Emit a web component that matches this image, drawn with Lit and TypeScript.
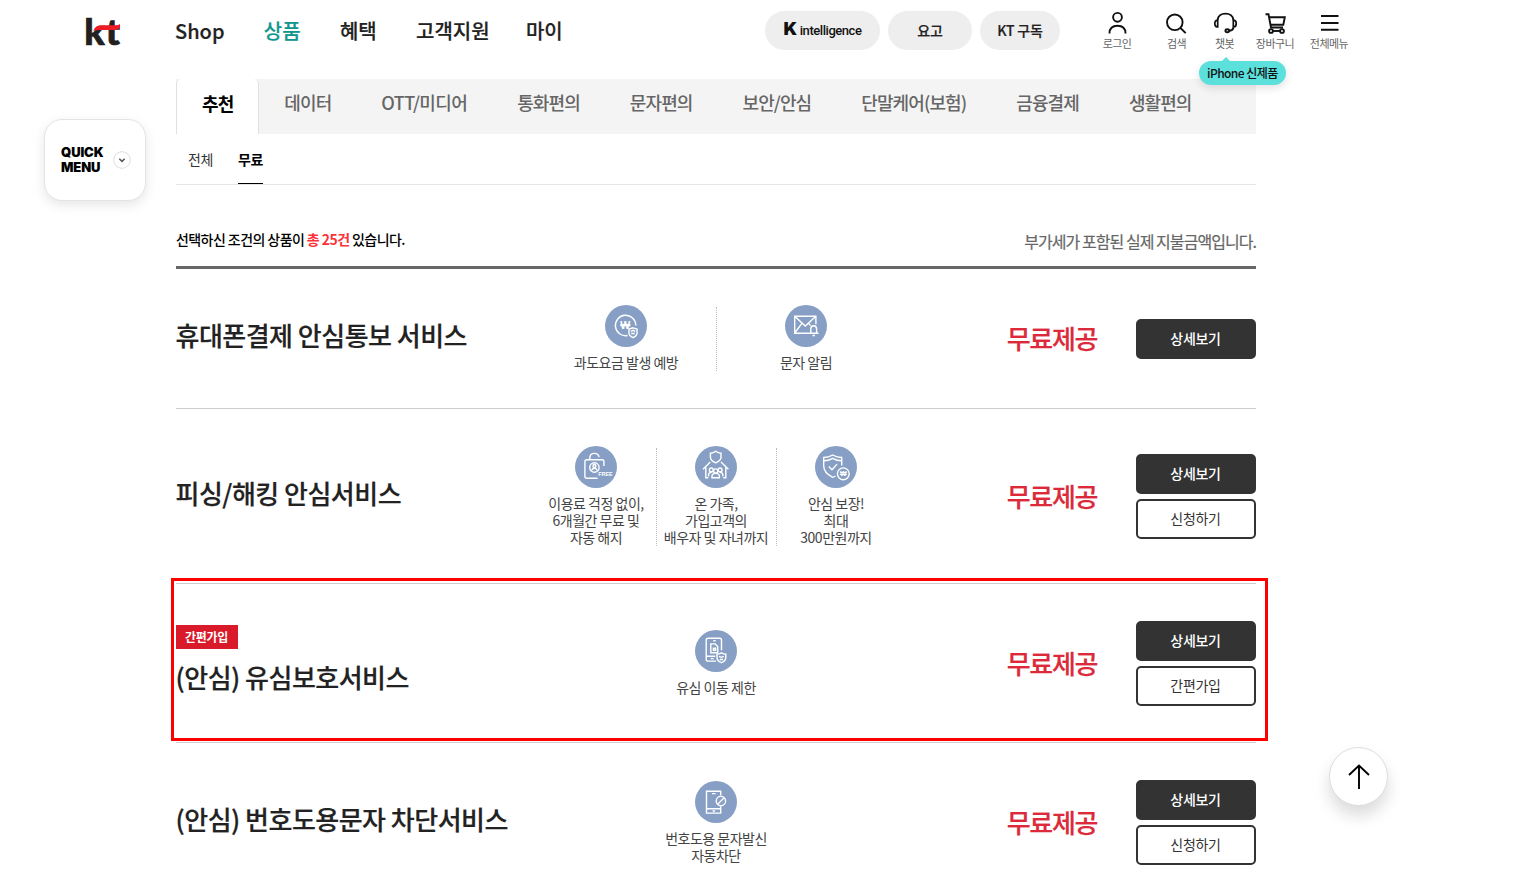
import { LitElement, css, html, svg, TemplateResult } from 'lit'
import { customElement, property } from 'lit/decorators.js'
import { classMap } from 'lit/directives/class-map.js'

interface Feature {
  icon: string
  lines: string[]
}

interface Product {
  name: string
  badge?: string
  marked?: boolean
  features: Feature[]
  buttons: string[]
}

const NAV = ['Shop', '상품', '혜택', '고객지원', '마이']

const TABS = ['추천', '데이터', 'OTT/미디어', '통화편의', '문자편의', '보안/안심', '단말케어(보험)', '금융결제', '생활편의']

const UTILS = [
  { icon: 'user', label: '로그인' },
  { icon: 'search', label: '검색' },
  { icon: 'headset', label: '챗봇', tip: 'iPhone 신제품' },
  { icon: 'cart', label: '장바구니' },
  { icon: 'menu', label: '전체메뉴' },
]

const PRODUCTS: Product[] = [
  {
    name: '휴대폰결제 안심통보 서비스',
    features: [
      { icon: 'won', lines: ['과도요금 발생 예방'] },
      { icon: 'mail', lines: ['문자 알림'] },
    ],
    buttons: ['상세보기'],
  },
  {
    name: '피싱/해킹 안심서비스',
    features: [
      { icon: 'lock', lines: ['이용료 걱정 없이,', '6개월간 무료 및', '자동 해지'] },
      { icon: 'family', lines: ['온 가족,', '가입고객의', '배우자 및 자녀까지'] },
      { icon: 'guard', lines: ['안심 보장!', '최대', '300만원까지'] },
    ],
    buttons: ['상세보기', '신청하기'],
  },
  {
    name: '(안심) 유심보호서비스',
    badge: '간편가입',
    marked: true,
    features: [{ icon: 'usim', lines: ['유심 이동 제한'] }],
    buttons: ['상세보기', '간편가입'],
  },
  {
    name: '(안심) 번호도용문자 차단서비스',
    features: [{ icon: 'block', lines: ['번호도용 문자발신', '자동차단'] }],
    buttons: ['상세보기', '신청하기'],
  },
]

// 24x24
const LINE_ICONS: Record<string, TemplateResult> = {
  user: svg`
    <circle cx="12.500" cy="6.3" r="4.400"/>
    <path d="M4.500 22.500c0-4.800 3-7.700 8-7.700s8 2.900 8 7.700"/>`,
  search: svg`
    <circle cx="9.800" cy="11.300" r="7.800"/>
    <path d="M15.500 17l5.200 5.200"/>`,
  headset: svg`
    <path d="M4.500 9.200C4.900 5 8.300 2.600 12.500 2.600s7.600 2.400 8 6.600M20.500 16.500c-.4 2.200-2 3.300-4.800 3.300"/>
    <path d="M4.700 9.400H4.100C2.500 9.400 1.800 10.500 1.800 12.600s.7 3.300 2.300 3.300h.6zM20.300 9.400h.6c1.600 0 2.300 1.100 2.300 3.200s-.7 3.300-2.300 3.300h-.6z" stroke-width="1.7"/>
    <ellipse cx="14.300" cy="19.700" rx="1.900" ry="1.500"/>`,
  cart: svg`
    <path d="M2.500 3.200h3l2.500 13.300h12M6.200 6.200h15.600l-1.500 7.600H7.800"/>
    <circle cx="8" cy="20" r="1.900"/>
    <circle cx="19" cy="20" r="1.900"/>
    <path d="M9.900 20h7.200"/>`,
  menu: svg`<path d="M4 5h17.500M4 12h17.500M4 18.700h17.500"/>`,
}

// 42x42, drawn over the blue circle
const FEATURE_ICONS: Record<string, TemplateResult> = {
  won: svg`
    <path d="M22.500 30.500A10.200 10.200 0 1 1 30.800 20.500"/>
    <text class="won" x="20.300" y="24.300" font-size="10.500">₩</text>
    <path d="M28 22.800l4 1.200v4c0 2.200-1.500 3.500-4 4.600-2.500-1.100-4-2.400-4-4.600v-4zM25.800 26.300l2.200-1 2.200 1M26.200 28.500h3.600"/>`,
  mail: svg`
    <path d="M24 28.200H9.700V11.200h21.200v8M9.700 11.200l10.600 9.800 10.600-9.800M9.700 28l7.200-9.600M23.700 18.400l1.800 2.200"/>
    <path d="M24.800 28.300h7.800l-1-1.400v-3c0-2-1.100-3.200-2.900-3.200s-2.900 1.200-2.900 3.200v3zM27.500 30.500h2.400"/>`,
  lock: svg`
    <path d="M14.700 13.600v-1.200c0-3 1.800-5 4.700-5 2.600 0 4.200 1.400 4.700 3.600M28.900 20v-4.500c0-1.100-.7-1.800-1.800-1.800H11.800c-1.200 0-1.900.7-1.900 1.800v15c0 1.100.7 1.700 1.900 1.700h10.800"/>
    <circle cx="19.400" cy="21.500" r="4.700"/>
    <circle cx="19.400" cy="20" r="1.500"/>
    <path d="M16.500 24.500c.5-1.500 1.500-2.200 2.900-2.200s2.400.7 2.900 2.200"/>
    <text x="30.400" y="29.800" font-size="5.400">FREE</text>`,
  family: svg`
    <path d="M20.700 5.300c1.800 1.400 3.500 1.900 5.300 1.900v4c0 2.400-1.700 4-5.300 5.600-3.600-1.600-5.300-3.200-5.300-5.600v-4c1.800 0 3.500-.5 5.300-1.900z"/>
    <path d="M15.300 16L8 23.200M26 16l7.400 7.200M10.800 21.300v10.500h2.500M30.800 21.300v10.500h-2.500"/>
    <circle cx="16.300" cy="23.900" r="1.900"/>
    <circle cx="25.100" cy="23.900" r="1.900"/>
    <circle cx="20.700" cy="25" r="2.100"/>
    <path d="M13.500 30.500v-1.400c0-1.600 1.100-2.700 3.200-2.700M27.900 30.500v-1.400c0-1.600-1.100-2.700-3.200-2.700M17 31.700v-1.500c0-1.800 1.400-2.800 3.700-2.800s3.700 1 3.700 2.800v1.500z"/>`,
  guard: svg`
    <path d="M20.500 30c-1 .6-1.900 1-2.800 1.300C11.800 28.500 8.700 25 8.700 19.800v-8.300c3.600 0 6.400-.9 9-2.500 2.600 1.600 5.400 2.500 9 2.500v8"/>
    <path d="M8.800 14.800c3.500 0 6.300-.9 8.900-2.500 2.600 1.600 5.400 2.500 8.900 2.500M13.800 20.600l3.200 3.100 5-5.600"/>
    <circle cx="28.300" cy="27.800" r="5.900"/>
    <text class="won" x="28.300" y="30.300" font-size="7">₩</text>`,
  usim: svg`
    <path d="M26.500 20.300V10.200c0-1.200-.7-1.900-1.900-1.900H13.100c-1.200 0-1.900.7-1.900 1.900v19c0 1.200.7 1.900 1.900 1.900h8M18.200 10.700h2.500M11.200 26.200h9M15.700 28.600h3"/>
    <path d="M15.800 13.900h4.400l2.500 2.600v6.200h-6.900zM18.400 18.200h2.200v2h-2.200z"/>
    <path d="M26.400 22.800c1.500.9 2.900 1.300 4.400 1.300v3.300c0 2.400-1.500 4-4.400 5.300-2.900-1.300-4.400-2.900-4.400-5.300v-3.300c1.500 0 2.900-.4 4.400-1.300zM24 26.300l2.400 1 2.400-1M24.800 29.500h3.200"/>`,
  block: svg`
    <path d="M25.700 14V10.200H11.500v21.900h14.200v-6.600M17 12.600h3.500M11.500 27.800h14.200M17.600 30h2.500"/>
    <circle cx="25.900" cy="20" r="4.700"/>
    <path d="M22.700 23.200l6.400-6.400"/>`,
}

@customElement('kt-header')
export class KtHeader extends LitElement {
  @property()
  current = '상품'

  render() {
    return html`
      <svg class="logo" viewBox="0 0 36 30">
        <text x="-0.800" y="28.400" textLength="20.500" lengthAdjust="spacingAndGlyphs">k</text>
        <text x="20.500" y="28.400" textLength="14.500" lengthAdjust="spacingAndGlyphs">t</text>
        <path d="M8.300 13.800C9.800 10 12.500 8.300 16.500 8.300h14.500c1.600 0 2.800-.4 4-1.300v3c-.9 2-2.500 3-5 3H15.500c-2.600 0-4.800.1-7.200.8z"/>
      </svg>
      <nav>
        ${NAV.map((name) => html`<a class=${classMap({ on: name === this.current })}>${name}</a>`)}
      </nav>
      <div class="pills">
        <a class="pill ai"><b>K</b><span>intelligence</span></a>
        <a class="pill yogo">요고</a>
        <a class="pill sub">KT 구독</a>
      </div>
      <ul class="utils">
        ${UTILS.map(
          (u) => html`
            <li class=${u.icon}>
              <svg viewBox="0 0 24 24">${LINE_ICONS[u.icon]}</svg>
              <span>${u.label}</span>
              ${u.tip ? html`<em>${u.tip}</em>` : ''}
            </li>
          `
        )}
      </ul>
    `
  }

  static styles = css`
    :host {
      display: flex;
      align-items: flex-start;
      height: 79px;
      padding-left: 85px;
      box-sizing: border-box;
    }
    .logo {
      width: 36px;
      height: 30px;
      margin-top: 17px;
      overflow: visible;
      font: 900 36px/30px Lato, sans-serif;
      fill: #231f20;
      stroke: #231f20;
      stroke-width: 0.7;
    }
    .logo path {
      fill: #ed1c24;
      stroke: none;
    }
    nav {
      display: flex;
      gap: 39.3px;
      width: 590px;
      margin-left: 54px;
      padding-top: 16px;
      box-sizing: border-box;
      font-size: 20px;
      font-weight: 500;
      line-height: 30px;
      -webkit-text-stroke: 0.2px;
      color: #222;
      white-space: nowrap;
    }
    nav a:last-child {
      margin-left: -3px;
    }
    .on {
      color: #12978f;
    }
    .pills {
      display: flex;
      gap: 8px;
      padding-top: 11px;
    }
    .pill {
      display: flex;
      align-items: center;
      justify-content: center;
      height: 39px;
      padding-bottom: 2px;
      box-sizing: border-box;
      border-radius: 20px;
      background: #eee;
      font-size: 14px;
      font-weight: 500;
      letter-spacing: -0.2px;
      -webkit-text-stroke: 0.2px;
      color: #222;
    }
    .ai {
      width: 115px;
      gap: 3px;
      padding-bottom: 0;
      font: 500 13px Roboto, sans-serif;
      letter-spacing: -0.45px;
      -webkit-text-stroke: 0;
      color: #111;
    }
    .ai b {
      font: 900 18px/20px Inter, sans-serif;
      margin-top: -3px;
    }
    .yogo {
      width: 84px;
    }
    .sub {
      width: 80px;
    }
    .utils {
      display: flex;
      margin: 0 0 0 36px;
      padding: 11px 0 0;
      list-style: none;
    }
    .utils li {
      position: relative;
      display: flex;
      flex-direction: column;
      align-items: center;
      width: 49px;
      font-size: 11px;
      line-height: 16px;
      letter-spacing: -0.05em;
      color: #666;
      white-space: nowrap;
    }
    .utils .user {
      width: 42px;
      margin-right: 14px;
    }
    .utils .headset {
      width: 47px;
    }
    .utils .cart {
      width: 54px;
    }
    .utils .menu {
      width: 54px;
    }
    .utils svg {
      width: 24px;
      height: 24px;
      fill: none;
      stroke: #111;
      stroke-width: 1.9;
    }
    em {
      position: absolute;
      top: 50px;
      left: -2px;
      padding: 0 8px;
      border-radius: 12px;
      background: #5ce0dc;
      box-shadow: 0 3px 8px rgba(0, 0, 0, 0.12);
      font-size: 12px;
      font-style: normal;
      font-weight: 500;
      line-height: 23px;
      padding-bottom: 1px;
      color: #111;
    }
    em::before {
      content: '';
      position: absolute;
      left: 23px;
      top: -4px;
      border: 4px solid transparent;
      border-top: 0;
      border-bottom-color: #5ce0dc;
    }
  `
}

@customElement('product-row')
export class ProductRow extends LitElement {
  @property({ attribute: false })
  product!: Product

  render() {
    const { name, badge, features, buttons, marked } = this.product
    return html`
      <div class=${classMap({ row: true, double: buttons.length > 1, marked: !!marked })}>
        <div class="title">
          ${badge ? html`<span class="badge">${badge}</span>` : ''}
          <strong>${name}</strong>
        </div>
        <ul>
          ${features.map(
            (f) => html`
              <li class=${classMap({ half: features.length === 2 })}>
                <svg viewBox="0 0 42 42">
                  <circle class="bg" cx="21" cy="21" r="21"/>
                  ${FEATURE_ICONS[f.icon]}
                </svg>
                ${f.lines.map((line) => html`<span>${line}</span>`)}
              </li>
            `
          )}
        </ul>
        <div class="price">무료제공</div>
        <div class="buttons">
          ${buttons.map((b, i) => html`<button class=${classMap({ dark: i === 0 })}>${b}</button>`)}
        </div>
      </div>
    `
  }

  static styles = css`
    :host {
      display: block;
    }
    .row {
      position: relative;
      display: grid;
      grid-template-columns: 360px 360px 1fr 120px;
      align-items: center;
      padding: 36px 0;
      border-bottom: 1px solid #ccc;
    }
    .double {
      padding-top: 37px;
    }
    .marked::after {
      content: '';
      position: absolute;
      inset: -6px -12px 1px -5px;
      border: 3px solid #f00;
    }
    .title {
      display: flex;
      flex-direction: column;
      align-items: flex-start;
      gap: 9px;
      padding-bottom: 7px;
    }
    .title strong {
      margin-left: -0.5px;
      font-size: 26px;
      font-weight: 500;
      line-height: 38px;
      letter-spacing: -0.52px;
      -webkit-text-stroke: 0.2px;
      color: #222;
      white-space: nowrap;
    }
    .badge {
      padding: 0 10px 0 9px;
      background: #d91a2a;
      font-size: 12px;
      font-weight: 700;
      line-height: 24px;
      letter-spacing: -0.3px;
      color: #fff;
    }
    ul {
      display: flex;
      justify-content: center;
      margin: 0;
      padding: 0;
      list-style: none;
    }
    li {
      position: relative;
      display: flex;
      flex-direction: column;
      align-items: center;
      width: 120px;
      padding-bottom: 1px;
      font-size: 14px;
      line-height: 17px;
      letter-spacing: -0.5px;
      color: #444;
      white-space: nowrap;
    }
    .half {
      width: 180px;
    }
    li + li::before {
      content: '';
      position: absolute;
      left: 0;
      top: 2px;
      bottom: 1px;
      border-left: 1px dotted #bbb;
    }
    svg {
      width: 42px;
      height: 42px;
      margin-bottom: 7px;
      fill: none;
      stroke: #fff;
      stroke-width: 1.4;
    }
    svg .bg {
      fill: #879fc4;
      stroke: none;
    }
    svg text {
      fill: #fff;
      stroke: none;
      font-family: 'Liberation Sans', sans-serif;
      font-weight: 700;
      letter-spacing: 0;
      text-anchor: middle;
    }
    .price {
      margin-left: 72px;
      padding-bottom: 2px;
      text-align: center;
      font-size: 26px;
      font-weight: 500;
      line-height: 38px;
      letter-spacing: -0.05em;
      -webkit-text-stroke: 0.2px;
      color: #dc2a3a;
    }
    .buttons {
      display: flex;
      flex-direction: column;
      gap: 5px;
    }
    button {
      height: 40px;
      padding: 0 1px 2px 0;
      border: 2px solid #333;
      border-radius: 5px;
      background: #fff;
      font: inherit;
      font-size: 14px;
      letter-spacing: -0.02em;
      color: #333;
    }
    .dark {
      background: #333;
      font-weight: 500;
      color: #fff;
    }
  `
}

@customElement('app-root')
export class AppRoot extends LitElement {
  render() {
    return html`
      <kt-header></kt-header>
      <main>
        <div class="tabs">
          ${TABS.map((tab, i) => html`<a class=${classMap({ on: i === 0 })}>${tab}</a>`)}
        </div>
        <div class="subtabs"><a>전체</a><a class="on">무료</a></div>
        <div class="summary">
          <p>선택하신 조건의 상품이 <b>총 25건</b> 있습니다.</p>
          <p class="vat">부가세가 포함된 실제 지불금액입니다.</p>
        </div>
        ${PRODUCTS.map((p) => html`<product-row .product=${p}></product-row>`)}
      </main>
      <aside class="quick">
        <b>QUICK<br>MENU</b>
        <svg viewBox="0 0 18 18"><circle cx="9" cy="9" r="8.3"/><path d="M6.3 7.8L9 10.4l2.7-2.6"/></svg>
      </aside>
      <button class="top">
        <svg viewBox="0 0 24 28"><path d="M12 26V2.500M2 12L12 2.500 22 12"/></svg>
      </button>
    `
  }

  static styles = css`
    :host {
      position: relative;
      display: block;
      height: 891px;
      overflow: hidden;
      background: #fff;
      font-family: 'Noto Sans CJK KR', sans-serif;
    }
    main {
      width: 1080px;
      margin-left: 176px;
    }
    .tabs {
      display: flex;
      height: 55px;
      background: #f4f4f4;
      font-size: 18px;
      font-weight: 500;
      line-height: 46px;
      letter-spacing: -0.05em;
      color: #666;
    }
    .tabs a {
      padding: 0 25px;
    }
    .tabs a:nth-child(3) {
      letter-spacing: -0.6px;
    }
    .tabs .on {
      border: 1px solid #e0e0e0;
      border-width: 0 1px;
      border-radius: 5px 5px 0 0;
      background: #fff;
      font-weight: 700;
      line-height: 48px;
      color: #000;
    }
    .subtabs {
      display: flex;
      gap: 25px;
      height: 50px;
      padding-left: 12px;
      border-bottom: 1px solid #e5e5e5;
      font-size: 14px;
      line-height: 50px;
      letter-spacing: -0.03em;
      color: #333;
    }
    .subtabs .on {
      height: 49px;
      border-bottom: 1px solid #000;
      font-weight: 700;
      color: #000;
    }
    .summary {
      display: flex;
      justify-content: space-between;
      height: 81px;
      border-bottom: 3px solid #666;
      font-size: 14px;
      font-weight: 500;
      letter-spacing: -0.57px;
      color: #000;
    }
    .summary p {
      margin: 0;
      line-height: 108px;
    }
    .summary b {
      color: #fd313a;
    }
    .summary .vat {
      font-size: 16px;
      font-weight: 400;
      line-height: 112px;
      letter-spacing: -0.95px;
      -webkit-text-stroke: 0.2px;
      color: #666;
    }
    .quick {
      position: absolute;
      left: 44px;
      top: 119px;
      display: flex;
      align-items: center;
      justify-content: space-between;
      width: 102px;
      height: 82px;
      padding: 0 14px 0 16px;
      box-sizing: border-box;
      border: 1px solid #e4e4e4;
      border-radius: 18px;
      background: #fff;
      box-shadow: 0 4px 12px rgba(0, 0, 0, 0.1);
      font: 700 13px/15px Inter, sans-serif;
      letter-spacing: -0.1px;
      color: #000;
    }
    .quick svg {
      width: 18px;
      height: 18px;
      fill: none;
      stroke: #555;
      stroke-width: 1.5;
    }
    .quick circle {
      stroke: #ddd;
      stroke-width: 1;
    }
    .top {
      position: absolute;
      left: 1329px;
      top: 747px;
      display: grid;
      place-items: center;
      width: 59px;
      height: 59px;
      padding: 1px 0 0;
      border: 1px solid #ddd;
      border-radius: 50%;
      background: #fff;
      box-shadow: 0 10px 16px rgba(0, 0, 0, 0.14);
    }
    .top svg {
      width: 24px;
      height: 28px;
      fill: none;
      stroke: #000;
      stroke-width: 1.9;
    }
  `
}

declare global {
  interface HTMLElementTagNameMap {
    'app-root': AppRoot
    'kt-header': KtHeader
    'product-row': ProductRow
  }
}
